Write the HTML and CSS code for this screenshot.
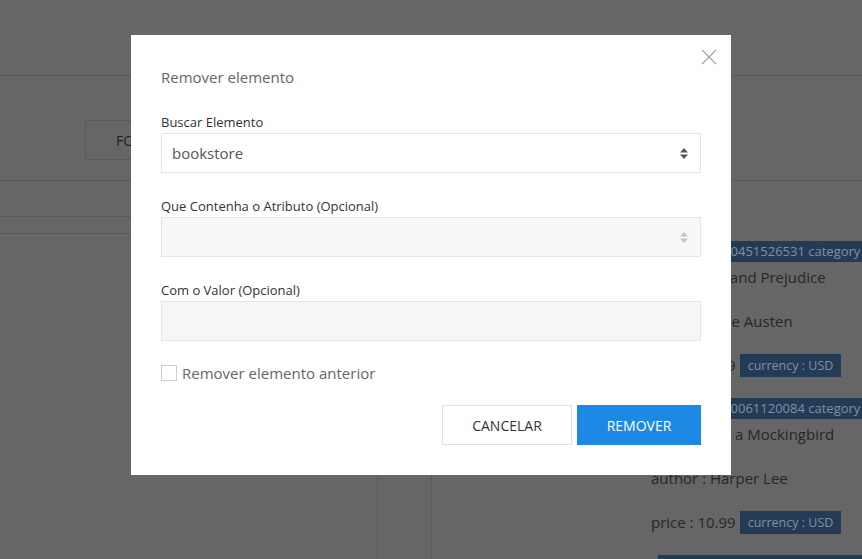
FILE: index.html
```html
<!DOCTYPE html>
<html lang="pt">
<head>
<meta charset="utf-8">
<title>Remover elemento</title>
<link rel="stylesheet" href="styles.css">
</head>
<body>
<div class="page">
  <header class="topbar"></header>
  <div class="toolbar"><button class="ghost-btn">FORMATAR</button></div>
  <div class="main">
    <aside class="left">
      <div class="tabs"></div>
      <div class="subtabs"></div>
    </aside>
    <div class="mid"></div>
    <section class="right">
      <div class="book">
        <span class="badge wide">isbn : 0451526531 category : fiction</span>
        <p class="line">title : Pride and Prejudice</p>
        <p class="line">author : Jane Austen</p>
        <p class="line">price : 12.99 <span class="badge">currency : USD</span></p>
      </div>
      <div class="book">
        <span class="badge wide">isbn : 0061120084 category : fiction</span>
        <p class="line">title : To Kill a Mockingbird</p>
        <p class="line">author : Harper Lee</p>
        <p class="line">price : 10.99 <span class="badge">currency : USD</span></p>
      </div>
      <div class="book">
        <span class="badge wide next">isbn : 0743273565 category : classic</span>
      </div>
    </section>
  </div>
</div>

<div class="backdrop">
  <div class="modal" role="dialog" aria-labelledby="modal-title">
    <button class="close" aria-label="Fechar">
      <svg width="16" height="16" viewBox="0 0 16 16"><path d="M1 1 L15 15 M15 1 L1 15" stroke="#a0a0a0" stroke-width="1.1" fill="none"/></svg>
    </button>
    <h2 class="modal-title" id="modal-title">Remover elemento</h2>

    <div class="field">
      <label class="label">Buscar Elemento</label>
      <div class="select">
        <span class="value">bookstore</span>
        <svg class="arrows" width="8" height="11" viewBox="0 0 8 11"><polygon points="0,4.5 4,0 8,4.5" fill="#555"/><polygon points="0,6.5 8,6.5 4,11" fill="#555"/></svg>
      </div>
    </div>

    <div class="field">
      <label class="label">Que Contenha o Atributo (Opcional)</label>
      <div class="select disabled">
        <span class="value"></span>
        <svg class="arrows" width="8" height="11" viewBox="0 0 8 11"><polygon points="0,4.5 4,0 8,4.5" fill="#c4c4c4"/><polygon points="0,6.5 8,6.5 4,11" fill="#c4c4c4"/></svg>
      </div>
    </div>

    <div class="field">
      <label class="label">Com o Valor (Opcional)</label>
      <div class="input disabled"></div>
    </div>

    <label class="check"><span class="box"></span><span class="check-text">Remover elemento anterior</span></label>

    <div class="actions">
      <button class="btn btn-default">CANCELAR</button>
      <button class="btn btn-primary">REMOVER</button>
    </div>
  </div>
</div>
</body>
</html>
```

FILE: styles.css
```css
* { box-sizing: border-box; }

html, body {
  margin: 0;
  padding: 0;
  height: 100%;
  overflow: hidden;
}

body {
  font-family: "Open Sans", "Noto Sans", "DejaVu Sans", sans-serif;
  background: #666666;
  color: #2b2b2b;
}

/* ---------- dimmed page behind the modal ---------- */
.page {
  height: 559px;
  display: flex;
  flex-direction: column;
}

.topbar {
  height: 76px;
  border-bottom: 1px solid #5a5a5a;
  flex: none;
}

.toolbar {
  height: 105px;
  padding: 44px 0 0 85px;
  border-bottom: 1px solid #5a5a5a;
  flex: none;
}

.ghost-btn {
  height: 40px;
  width: 130px;
  padding: 0 0 0 30px;
  text-align: left;
  background: transparent;
  border: 1px solid #5a5a5a;
  font-family: inherit;
  font-size: 14px;
  color: #1e1e1e;
}

.main {
  flex: 1;
  display: flex;
  min-height: 0;
}

.left {
  width: 378px;
  border-right: 1px solid #5a5a5a;
  flex: none;
}

.tabs {
  height: 36px;
  border-bottom: 1px solid #5a5a5a;
}

.subtabs {
  height: 17px;
  border-bottom: 1px solid #5a5a5a;
}

.mid {
  width: 54px;
  border-right: 1px solid #5a5a5a;
  flex: none;
}

.right {
  flex: 1;
  padding: 60px 0 0 219px;
  min-width: 0;
  white-space: nowrap;
}

.book {
  display: flex;
  flex-direction: column;
  align-items: flex-start;
}

.badge {
  display: inline-block;
  background: #243b56;
  color: #7f90a5;
  font-size: 12.5px;
  line-height: 23px;
  height: 23px;
  padding: 0 8px;
}

.badge.wide {
  font-size: 13px;
  height: 21px;
  line-height: 21px;
  margin-left: 36px;
  padding-left: 8px;
  padding-right: 40px;
}

.badge.wide.next {
  margin-left: 7px;
  height: 23px;
}

.line {
  margin: 4px 0 18px;
  font-size: 15px;
  line-height: 22px;
  height: 22px;
  color: #272727;
  display: flex;
  align-items: center;
  gap: 4px;
}

.line + .line { margin-top: 4px; }

.book + .book { margin-top: 4px; }

/* ---------- modal ---------- */
.backdrop {
  position: fixed;
  inset: 0;
  display: flex;
  justify-content: center;
  align-items: flex-start;
  padding-top: 35px;
}

.modal {
  position: relative;
  width: 600px;
  background: #ffffff;
  padding: 30px;
}

.close {
  position: absolute;
  top: 14px;
  right: 14px;
  width: 16px;
  height: 16px;
  padding: 0;
  border: 0;
  background: transparent;
  display: flex;
}

.modal-title {
  margin: 0 0 24px;
  font-size: 15px;
  line-height: 24px;
  font-weight: 400;
  color: #666666;
}

.field {
  margin-bottom: 24px;
}

.label {
  display: block;
  font-size: 13px;
  line-height: 18px;
  margin-bottom: 2px;
  color: #333333;
}

.select, .input {
  height: 40px;
  border: 1px solid #e5e5e5;
  background: #ffffff;
  display: flex;
  align-items: center;
  padding: 0 12px 0 10px;
}

.select.disabled {
  background: #f8f8f8;
}

.input.disabled { background: #f6f6f6; }

.value {
  flex: 1;
  font-size: 15px;
  color: #555555;
}

.check {
  display: flex;
  align-items: center;
  gap: 5px;
  height: 16px;
  margin-bottom: 24px;
}

.box {
  width: 16px;
  height: 16px;
  border: 1px solid #cccccc;
  background: #fff;
  flex: none;
}

.check-text {
  font-size: 15px;
  line-height: 16px;
  color: #666666;
}

.actions {
  display: flex;
  justify-content: flex-end;
  gap: 5px;
}

.btn {
  height: 40px;
  font-family: inherit;
  font-size: 14px;
  padding: 0;
  cursor: pointer;
}

.btn-default {
  width: 130px;
  background: #ffffff;
  border: 1px solid #e2e2e2;
  color: #333333;
}

.btn-primary {
  width: 124px;
  background: #1e88e5;
  border: 1px solid #1e88e5;
  color: #ffffff;
}
```
